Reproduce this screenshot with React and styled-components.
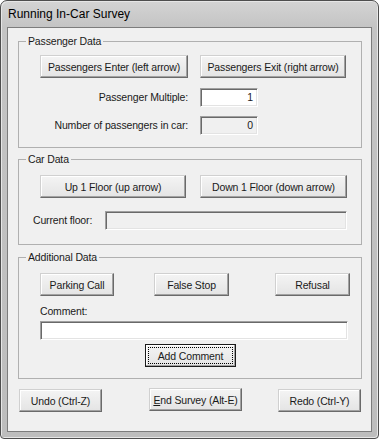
import React from 'react';
import styled, { createGlobalStyle, css } from 'styled-components';

const GlobalStyle = createGlobalStyle`
  html, body {
    margin: 0;
    padding: 0;
    background: #ffffff;
  }
  body {
    font-family: "Liberation Sans", Arial, sans-serif;
    font-size: 10.5px;
    letter-spacing: -0.15px;
    color: #1a1a1a;
  }
`;

const Window = styled.div`
  width: 379px;
  height: 439px;
  box-sizing: border-box;
  border: 1px solid #4e4e4e;
  border-radius: 7px 7px 4px 4px;
  background: linear-gradient(#d4d4d4, #c4c4c4 26px, #bdbdbd);
  box-shadow: inset 1px 1px 0 #e6e6e6, inset -1px -1px 0 #e6e6e6;
  padding: 0 6px 6px;
  display: flex;
  flex-direction: column;
`;

const TitleBar = styled.div`
  height: 26px;
  display: flex;
  align-items: center;
  padding-left: 1px;
  font-size: 12px;
  letter-spacing: 0;
  color: #000;
`;

const Client = styled.div`
  flex: 1;
  border: 1px solid #7c7c7c;
  background: #f0f0f0;
  padding: 7px 9px 0 10px;
  display: flex;
  flex-direction: column;
`;

const Group = styled.fieldset`
  margin: ${({ $top }) => $top || 0}px 0 0 0;
  padding: 0;
  min-width: 0;
  border: 1px solid #b0b0b0;
`;

const Legend = styled.legend`
  margin-left: 7px;
  padding: 0 2px;
  line-height: 13px;
`;

const Body = styled.div`
  display: flex;
  flex-direction: column;
  padding: ${({ $pad }) => $pad};
`;

const Row = styled.div`
  display: flex;
  align-items: center;
  margin-top: ${({ $top }) => $top || 0}px;
  padding-left: ${({ $left }) => $left || 0}px;
`;

const Button = styled.button`
  box-sizing: border-box;
  height: 23px;
  width: ${({ $w }) => $w}px;
  margin: ${({ $mt }) => $mt || 0}px 0 0 ${({ $ml }) => $ml || 0}px;
  padding: 0;
  white-space: nowrap;
  font-family: inherit;
  font-size: inherit;
  letter-spacing: inherit;
  color: inherit;
  background: linear-gradient(#f4f4f4, #e4e4e4);
  border: 1px solid;
  border-color: #d0d0d0 #6a6a6a #6a6a6a #d0d0d0;
  box-shadow: inset -1px -1px 0 #a2a2a2, inset 1px 1px 0 #ffffff;
  ${({ $focused }) =>
    $focused &&
    css`
      border-color: #1a1a1a;
      outline: 1px dotted #000;
      outline-offset: -4px;
    `}
`;

const Label = styled.span`
  width: ${({ $w }) => ($w ? `${$w}px` : 'auto')};
  text-align: ${({ $right }) => ($right ? 'right' : 'left')};
  line-height: 13px;
  white-space: nowrap;
`;

const Field = styled.div`
  box-sizing: border-box;
  height: 19px;
  width: ${({ $w }) => ($w ? `${$w}px` : 'auto')};
  margin-left: ${({ $ml }) => $ml || 0}px;
  background: ${({ $readOnly }) => ($readOnly ? '#f0f0f0' : '#ffffff')};
  border: 1px solid;
  border-color: #a0a0a0 #ffffff #ffffff #a0a0a0;
  box-shadow: inset 1px 1px 0 #696969, inset -1px -1px 0 #e3e3e3;
  padding: 0 4px;
  display: flex;
  align-items: center;
  justify-content: flex-end;
  line-height: 13px;
`;

const Footer = styled.div`
  display: flex;
  align-items: flex-start;
  margin-top: 10px;
  padding-left: 1px;
`;

const Key = styled.span`
  text-decoration: underline;
`;

export default function App() {
  return (
    <>
      <GlobalStyle />
      <Window>
        <TitleBar>Running In-Car Survey</TitleBar>
        <Client>
          <Group>
            <Legend>Passenger Data</Legend>
            <Body $pad="7px 0 12px 21px">
              <Row>
                <Button $w={148}>Passengers Enter (left arrow)</Button>
                <Button $w={146} $ml={12}>Passengers Exit (right arrow)</Button>
              </Row>
              <Row $top={10}>
                <Label $w={148} $right>Passenger Multiple:</Label>
                <Field $w={58} $ml={12}>1</Field>
              </Row>
              <Row $top={9}>
                <Label $w={148} $right>Number of passengers in car:</Label>
                <Field $w={58} $ml={12} $readOnly>0</Field>
              </Row>
            </Body>
          </Group>

          <Group $top={5}>
            <Legend>Car Data</Legend>
            <Body $pad="9px 0 14px 14px">
              <Row $left={7}>
                <Button $w={146}>Up 1 Floor (up arrow)</Button>
                <Button $w={147} $ml={14}>Down 1 Floor (down arrow)</Button>
              </Row>
              <Row $top={13}>
                <Label $w={72}>Current floor:</Label>
                <Field $w={242} $readOnly />
              </Row>
            </Body>
          </Group>

          <Group $top={6}>
            <Legend>Additional Data</Legend>
            <Body $pad="9px 0 11px 21px">
              <Row>
                <Button $w={74}>Parking Call</Button>
                <Button $w={75} $ml={40}>False Stop</Button>
                <Button $w={75} $ml={46}>Refusal</Button>
              </Row>
              <Row $top={9}>
                <Label>Comment:</Label>
              </Row>
              <Row $top={3}>
                <Field $w={308} />
              </Row>
              <Row $top={4} $left={105}>
                <Button $w={91} $focused>Add Comment</Button>
              </Row>
            </Body>
          </Group>

          <Footer>
            <Button $w={83}>Undo (Ctrl-Z)</Button>
            <Button $w={93} $ml={47} $mt={-1}>
              <Key>E</Key>nd Survey (Alt-E)
            </Button>
            <Button $w={83} $ml={36}>Redo (Ctrl-Y)</Button>
          </Footer>
        </Client>
      </Window>
    </>
  );
}
